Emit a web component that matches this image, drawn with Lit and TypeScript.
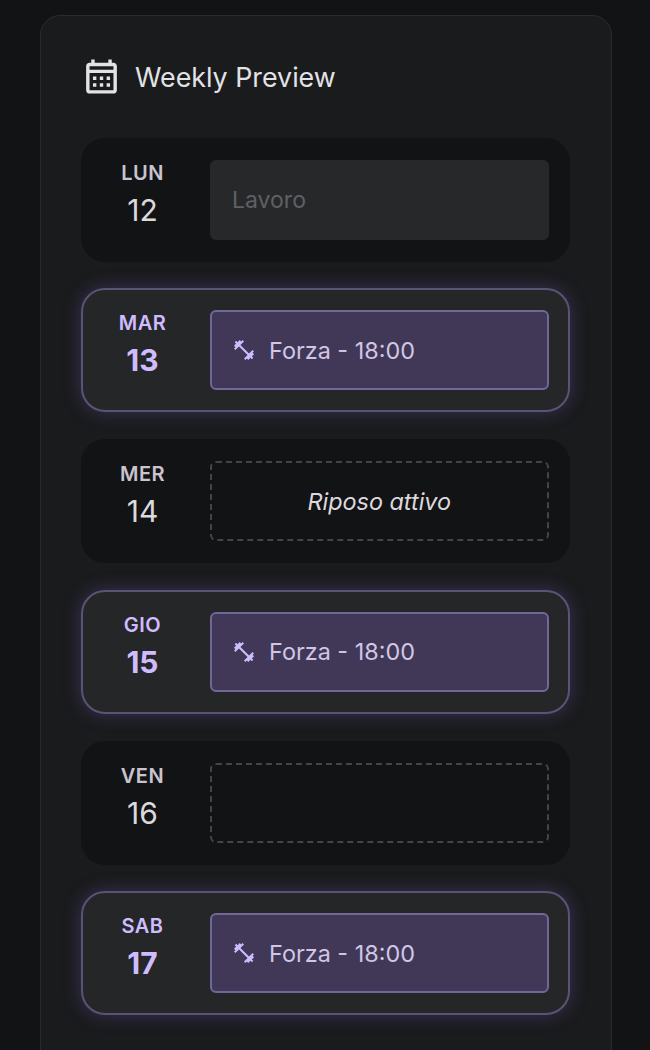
import { LitElement, html, css, svg } from "lit";
import { customElement } from "lit/decorators.js";

type Day = { d: string; n: number; kind: "work" | "gym" | "rest" | "empty" };
const days: Day[] = [
  { d: "LUN", n: 12, kind: "work" },
  { d: "MAR", n: 13, kind: "gym" },
  { d: "MER", n: 14, kind: "rest" },
  { d: "GIO", n: 15, kind: "gym" },
  { d: "VEN", n: 16, kind: "empty" },
  { d: "SAB", n: 17, kind: "gym" },
];

const calendar = svg`<svg class="cal" viewBox="0 0 24 24" fill="#e3e2e6">
  <path d="M19 4h-1V2h-2v2H8V2H6v2H5c-1.1 0-2 .9-2 2v14c0 1.1.9 2 2 2h14c1.1 0 2-.9 2-2V6c0-1.1-.9-2-2-2zm0 16H5V10h14v10zm0-12H5V6h14v2zM9 14H7v-2h2v2zm4 0h-2v-2h2v2zm4 0h-2v-2h2v2zm-8 4H7v-2h2v2zm4 0h-2v-2h2v2zm4 0h-2v-2h2v2z"/>
</svg>`;

const dumbbell = svg`<svg class="bell" viewBox="0 0 24 24" fill="#cfbcff">
  <path d="M20.57 14.86L22 13.43 20.57 12 17 15.57 8.43 7 12 3.43 10.57 2 9.14 3.43 7.71 2 5.57 4.14 4.14 2.71 2.71 4.14l1.43 1.43L2 7.71l1.43 1.43L2 10.57 3.43 12 7 8.43 15.57 17 12 20.57 13.43 22l1.43-1.43L16.29 22l2.14-2.14 1.43 1.43 1.43-1.43-1.43-1.43L22 16.29z"/>
</svg>`;

@customElement("app-root")
export class AppRoot extends LitElement {
  static styles = css`
    :host {
      display: block;
      width: 650px;
      height: 1050px;
      overflow: hidden;
      background: #121315;
      font-family: Inter, "Liberation Sans", sans-serif;
      box-sizing: border-box;
      padding: 15px 38.5px 0 40px;
    }
    .card {
      box-sizing: border-box;
      height: 1100px;
      background: #1a1b1d;
      border: 1.5px solid #2a2b2e;
      border-radius: 20px;
      padding: 0 40px;
    }
    .head {
      display: flex;
      align-items: center;
      gap: 13px;
      height: 121.5px;
      color: #e3e2e6;
      font-size: 26.8px;
    }
    .cal { width: 41px; height: 41px; flex: none; }
    .list { display: flex; flex-direction: column; gap: 26.8px; }
    .row {
      box-sizing: border-box;
      height: 124px;
      display: flex;
      align-items: center;
      margin-right: 1px;
      padding: 0 21px;
      gap: 27px;
      background: #121315;
      border-radius: 24px;
    }
    .row.on {
      background: #252628;
      border: 2px solid #5a5374;
      padding: 0 19px;
      box-shadow: 0 0 18px rgba(120, 98, 200, 0.34);
    }
    .day {
      width: 81px;
      flex: none;
      display: flex;
      flex-direction: column;
      align-items: center;
      color: #cac4d0;
      padding-bottom: 11px;
    }
    .name { font-size: 20px; font-weight: 600; line-height: 24px; letter-spacing: 0.5px; margin-bottom: 7px; }
    .num { font-size: 30px; line-height: 36px; color: #dcd9de; }
    .on .name { color: #cfbcff; }
    .on .num { color: #cfbcff; font-weight: 700; }
    .slot {
      box-sizing: border-box;
      flex: 1;
      height: 80px;
      border-radius: 6px;
      display: flex;
      align-items: center;
      font-size: 23.4px;
      padding: 0 20px;
    }
    .work { background: #27282a; color: #5f6064; padding-left: 22px; font-size: 23px; }
    .gym {
      background: #413857;
      border: 2px solid #726799;
      color: #d0c6e6;
      gap: 13px;
    }
    .rest, .empty { border: 2px dashed #45444b; }
    .rest { justify-content: center; color: #dcd9de; font-style: italic; }
    .bell { width: 24px; height: 24px; flex: none; }
  `;

  private slot_(k: Day["kind"]) {
    if (k === "work") return html`<div class="slot work">Lavoro</div>`;
    if (k === "gym") return html`<div class="slot gym">${dumbbell}<span>Forza - 18:00</span></div>`;
    if (k === "rest") return html`<div class="slot rest">Riposo attivo</div>`;
    return html`<div class="slot empty"></div>`;
  }

  render() {
    return html`<div class="card">
      <div class="head">${calendar}<span>Weekly Preview</span></div>
      <div class="list">
        ${days.map(
          (x) => html`<div class="row ${x.kind === "gym" ? "on" : ""}">
            <div class="day"><span class="name">${x.d}</span><span class="num">${x.n}</span></div>
            ${this.slot_(x.kind)}
          </div>`
        )}
      </div>
    </div>`;
  }
}
